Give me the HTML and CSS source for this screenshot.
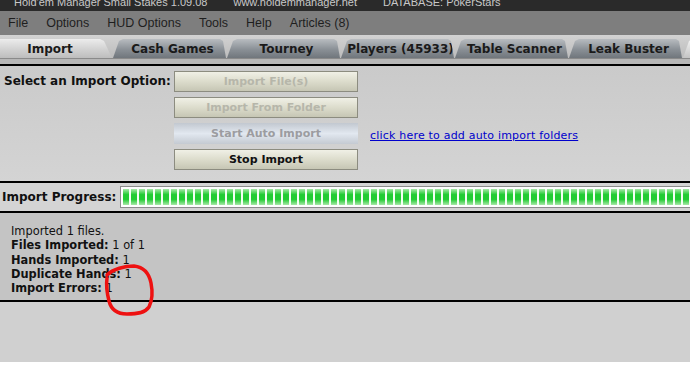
FILE: index.html
```html
<!DOCTYPE html>
<html lang="en">

<head>
  <meta charset="UTF-8" />
  <meta name="viewport" content="width=device-width, initial-scale=1.0" />
  <title>Import</title>
  <link rel="stylesheet" href="styles.css">
</head>

<body>
  <div class="app">
    <div class="titlebar">
      <span class="title-text">Hold'em Manager Small Stakes 1.09.08</span>
      <span class="title-text">www.holdemmanager.net</span>
      <span class="title-text">DATABASE: PokerStars</span>
    </div>
    <div class="menubar">
      <span>File</span>
      <span>Options</span>
      <span>HUD Options</span>
      <span>Tools</span>
      <span>Help</span>
      <span>Articles (8)</span>
    </div>
    <div class="tabstrip">
      <div class="tab active">Import</div>
      <div class="tab">Cash Games</div>
      <div class="tab">Tourney</div>
      <div class="tab">Players (45933)</div>
      <div class="tab">Table Scanner</div>
      <div class="tab">Leak Buster</div>
      <div class="tab stub"></div>
    </div>
    <div class="tab-under"></div>

    <div class="options">
      <div class="opt-label">Select an Import Option:</div>
      <div class="opt-buttons">
        <div class="btn disabled">Import File(s)</div>
        <div class="btn disabled">Import From Folder</div>
        <div class="btn auto">Start Auto Import</div>
        <div class="btn">Stop Import</div>
      </div>
      <a class="auto-link" href="#">click here to add auto import folders</a>
    </div>

    <div class="progress-row">
      <div class="progress-label">Import Progress:</div>
      <div class="progress-box">
        <div class="progress-fill"></div>
      </div>
    </div>

    <div class="results">
      <div>Imported 1 files.</div>
      <div><b>Files Imported:</b> 1 of 1</div>
      <div><b>Hands Imported:</b> 1</div>
      <div><b>Duplicate Hands:</b> 1</div>
      <div><b>Import Errors:</b> 1</div>
    </div>

    <div class="footer"></div>
  </div>

  <svg class="circle" width="60" height="56" viewBox="0 0 60 56">
    <path d="M4 12 C10 6 22 3 31 3 C40 4 46 10 48 20 C50 30 49 38 46 44 C42 50 34 51 24 51 C14 51 8 46 6 38 C4 30 3 22 4 15"
      fill="none" stroke="#ee1111" stroke-width="3.5" stroke-linecap="round" />
  </svg>
</body>

</html>
```

FILE: styles.css
```css
html,
body {
  margin: 0;
  padding: 0;
  background: #ffffff;
}

body {
  width: 693px;
  height: 365px;
  overflow: hidden;
  position: relative;
  font-family: "DejaVu Sans", Verdana, sans-serif;
}

.app {
  width: 690px;
  height: 362px;
  display: flex;
  flex-direction: column;
  background: #d0d0d0;
  overflow: hidden;
}

.titlebar {
  height: 11px;
  background: #2a2a2a;
  display: flex;
  gap: 26px;
  padding-left: 14px;
  overflow: hidden;
  flex-shrink: 0;
}

.title-text {
  color: #c8c8c8;
  font-family: "Liberation Sans", Arial, sans-serif;
  font-size: 11px;
  line-height: 12px;
  margin-top: -4px;
  white-space: nowrap;
}

.menubar {
  height: 24px;
  background: #7e7e7e;
  display: flex;
  align-items: center;
  padding-left: 8px;
  font-family: "Liberation Sans", Arial, sans-serif;
  font-size: 12.5px;
  color: #1e1e1e;
  flex-shrink: 0;
}

.menubar span {
  margin-right: 18px;
}

.tabstrip {
  height: 23px;
  background: linear-gradient(#d2d2d2, #bcbcbc);
  display: flex;
  align-items: flex-end;
  flex-shrink: 0;
  overflow: hidden;
}

.tab {
  height: 19px;
  width: 113px;
  margin-right: 1px;
  flex-shrink: 0;
  display: flex;
  align-items: center;
  justify-content: center;
  font-weight: bold;
  font-size: 12px;
  color: #1a1a1a;
  background: linear-gradient(#b8bcc0, #8a9096 55%, #70767c);
  clip-path: polygon(0 100%, 6px 2px, 10px 0, calc(100% - 6px) 0, calc(100% - 3px) 2px, 100% 100%);
  box-sizing: border-box;
  padding-left: 6px;
}

.tab.active {
  width: 112px;
  background: linear-gradient(#ececec, #cfcfcf 60%, #bdbdbd);
  clip-path: polygon(0 100%, 0 0, calc(100% - 12px) 0, calc(100% - 8px) 2px, 100% 100%);
  padding-left: 0;
  padding-right: 12px;
}

.tab.stub {
  width: 40px;
  background: linear-gradient(#f4f4f4, #c4c4c4);
}

.tab-under {
  height: 5px;
  background: #b6b6b6;
  border-top: 1px solid #8a8a8a;
  border-bottom: 2px solid #000000;
  flex-shrink: 0;
}

.options {
  height: 117px;
  box-sizing: border-box;
  padding-top: 5px;
  background: linear-gradient(#cacaca, #d4d4d4);
  display: flex;
  align-items: flex-start;
  border-bottom: 2px solid #000000;
  flex-shrink: 0;
}

.opt-label {
  width: 174px;
  padding-left: 4px;
  box-sizing: border-box;
  font-weight: bold;
  font-size: 12px;
  line-height: 21px;
  color: #111111;
}

.opt-buttons {
  width: 184px;
  display: flex;
  flex-direction: column;
  gap: 5px;
}

.btn {
  height: 21px;
  box-sizing: border-box;
  border: 1px solid #8c8c80;
  background: linear-gradient(#f0f0e6, #dcdccc 50%, #c6c6b4);
  font-size: 11px;
  font-weight: bold;
  color: #111111;
  display: flex;
  align-items: center;
  justify-content: center;
}

.btn.disabled {
  color: #b6b6aa;
}

.btn.auto {
  border: none;
  color: #9c9ca0;
  background: linear-gradient(#c2c8d0, #e2e8f0 50%, #c4cad2);
}

.auto-link {
  margin-left: 12px;
  margin-top: 58px;
  font-size: 11px;
  letter-spacing: 0.2px;
  color: #0000cc;
  text-decoration: underline;
}

.progress-row {
  height: 30px;
  box-sizing: border-box;
  display: flex;
  align-items: center;
  background: #d4d4d4;
  border-bottom: 2px solid #000000;
  flex-shrink: 0;
}

.progress-label {
  width: 120px;
  padding-left: 2px;
  box-sizing: border-box;
  font-weight: bold;
  font-size: 12px;
  color: #111111;
}

.progress-box {
  flex: 1;
  height: 22px;
  margin-right: -4px;
  box-sizing: border-box;
  border: 1px solid #8c8c8c;
  background: #ffffff;
  padding: 2px 2px;
}

.progress-fill {
  height: 100%;
  background:
    repeating-linear-gradient(90deg, transparent 0 6px, #f4fff4 6px 8px),
    linear-gradient(#a8e8a8, #22cc33 35%, #22cc33 65%, #a8e8a8);
}

.results {
  height: 89px;
  box-sizing: border-box;
  padding: 11px 0 0 11px;
  background: #c4c4c4;
  font-size: 11.4px;
  line-height: 14.3px;
  color: #111111;
  border-bottom: 2px solid #000000;
  flex-shrink: 0;
}

.footer {
  flex: 1;
  background: #d0d0d0;
}

.circle {
  position: absolute;
  left: 103px;
  top: 263px;
}
```
